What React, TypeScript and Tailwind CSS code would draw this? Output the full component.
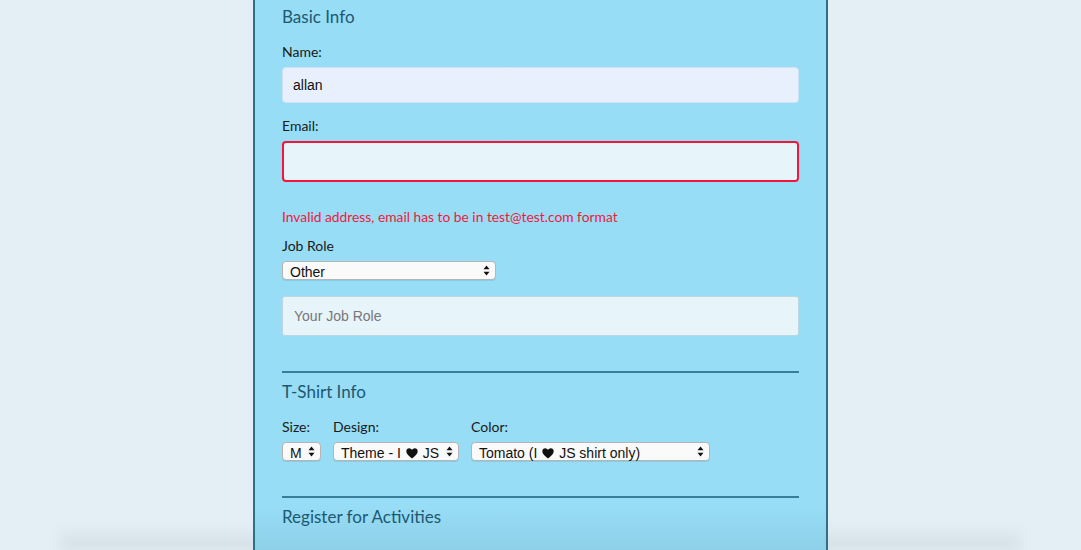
import React from "react";

const Arrows = () => (
  <svg width="7" height="11" viewBox="0 0 7 11" className="shrink-0">
    <path d="M3.5 0.5 L6.5 4.3 L0.5 4.3 Z" fill="#111" />
    <path d="M3.5 10.5 L6.5 6.7 L0.5 6.7 Z" fill="#111" />
  </svg>
);

const FakeSelect = ({ value, className = "" }: { value: React.ReactNode; className?: string }) => (
  <div
    className={`flex items-center justify-between h-[19px] pl-[7px] pr-[5px] rounded-[4px] border border-[#b5b5b5] bg-[#fafafa] text-[14px] text-[#111] leading-none shadow-[0_1px_0_rgba(0,0,0,0.08)] ${className}`}
    style={{ fontFamily: '"Liberation Sans", Arial, sans-serif' }}
  >
    <span className="pt-[2px] whitespace-nowrap">{value}</span>
    <Arrows />
  </div>
);

const Heart = () => (
  <svg width="12" height="11" viewBox="0 0 12 11" className="inline-block align-[-1px] mx-[1px]">
    <path d="M6 10.5 C3 8 0.3 6 0.3 3.3 C0.3 1.5 1.6 0.3 3.2 0.3 C4.5 0.3 5.4 1.1 6 2.1 C6.6 1.1 7.5 0.3 8.8 0.3 C10.4 0.3 11.7 1.5 11.7 3.3 C11.7 6 9 8 6 10.5 Z" fill="#111" />
  </svg>
);

export default function App() {
  return (
    <div className="w-[1081px] h-[550px] overflow-hidden bg-[#e4eff5] relative" style={{ fontFamily: 'Lato, "Noto Sans", sans-serif' }}>
      <div className="absolute left-[60px] right-[60px] bottom-0 h-[24px] bg-gradient-to-b from-transparent to-[#cfdde2] blur-[6px] pointer-events-none" />
      <div className="relative ml-[253px] w-[575px] h-full bg-gradient-to-b from-[#97ddf5] from-[92%] to-[#8dd0e8] border-x-2 border-[#2f6f89] px-[27px] pt-[6px]">
        <h2 className="text-[17px] text-[#1d5871] leading-[20px] mt-[1px]">Basic Info</h2>

        <label className="block text-[14px] text-[#1a1a1a] mt-[17px] leading-[16px]">Name:</label>
        <div
          className="mt-[7px] h-[36px] rounded-[4px] bg-[#e8f0fe] border border-[#cfe3f5] flex items-center px-[10px] text-[14px] text-[#111]"
          style={{ fontFamily: '"Liberation Sans", Arial, sans-serif' }}
        >
          allan
        </div>

        <label className="block text-[14px] text-[#1a1a1a] mt-[15px] leading-[16px]">Email:</label>
        <div className="mt-[7px] h-[41px] rounded-[4px] bg-[#e7f5fb] border-2 border-[#f2163a]" />

        <p className="mt-[27px] text-[13.8px] text-[#ef1a3c] leading-[16px]">
          Invalid address, email has to be in test@test.com format
        </p>

        <label className="block text-[14px] text-[#1a1a1a] mt-[13px] leading-[16px]">Job Role</label>
        <FakeSelect value="Other" className="mt-[7px] w-[214px]" />

        <div
          className="mt-[16px] h-[40px] rounded-[3px] bg-[#e7f5fb] border border-[#bcd7e2] flex items-center px-[11px] text-[14px] text-[#777]"
          style={{ fontFamily: '"Liberation Sans", Arial, sans-serif' }}
        >
          Your Job Role
        </div>

        <div className="mt-[35px] h-[2px] bg-[#3a7d98]" />

        <h2 className="text-[17px] text-[#1d5871] leading-[20px] mt-[9px]">T-Shirt Info</h2>

        <div className="flex mt-[17px]">
          <div className="w-[51px]">
            <label className="block text-[14px] text-[#1a1a1a] leading-[16px]">Size:</label>
            <FakeSelect value="M" className="mt-[7px] w-[39px]" />
          </div>
          <div className="w-[138px]">
            <label className="block text-[14px] text-[#1a1a1a] leading-[16px]">Design:</label>
            <FakeSelect value={<>Theme - I <Heart /> JS</>} className="mt-[7px] w-[126px]" />
          </div>
          <div>
            <label className="block text-[14px] text-[#1a1a1a] leading-[16px]">Color:</label>
            <FakeSelect value={<>Tomato (I <Heart /> JS shirt only)</>} className="mt-[7px] w-[239px]" />
          </div>
        </div>

        <div className="mt-[35px] h-[2px] bg-[#3a7d98]" />

        <h2 className="text-[17px] text-[#1d5871] leading-[20px] mt-[9px]">Register for Activities</h2>

        <div className="flex items-center mt-[22px] text-[14px] text-[#1a1a1a]">
          <span className="w-[12px] h-[12px] border border-[#999] rounded-[2px] bg-white mr-[4px]" />
          <span>Main Conference — $200</span>
        </div>
      </div>
    </div>
  );
}
